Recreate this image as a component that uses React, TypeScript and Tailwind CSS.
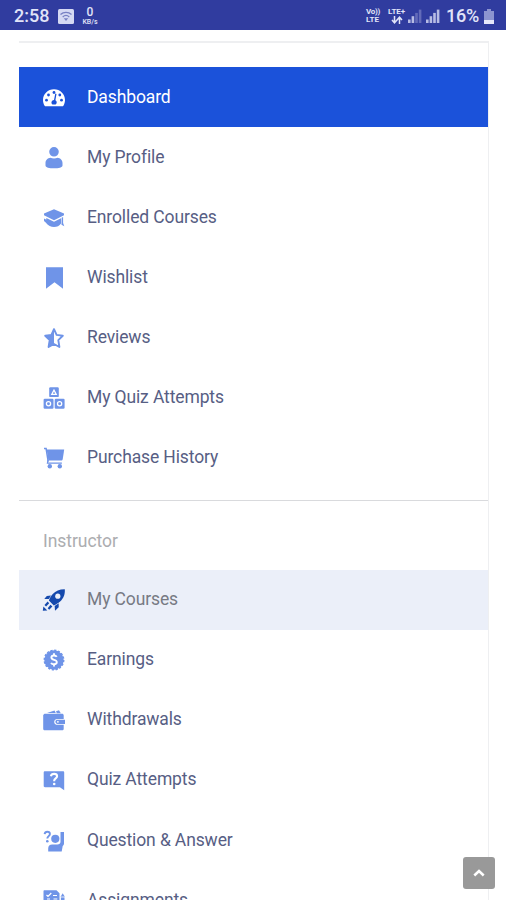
import React from "react";

type IconName =
  | "gauge" | "user" | "cap" | "bookmark" | "star" | "blocks" | "cart"
  | "rocket" | "badge" | "wallet" | "quiz" | "ask" | "assign";

const icons: Record<IconName, React.ReactNode> = {
  gauge: (
    <>
      <path fill="currentColor" d="M11 2.2C4.9 2.2 0 7 0 13c0 2.100.6 4.100 1.600 5.700.3.500.700.600 1.200.600h16.400c.5 0 .9-.1 1.200-.6 1-1.600 1.600-3.600 1.600-5.700C22 7 17.100 2.200 11 2.200z" />
      <g fill="#1b52da">
        <circle cx="11" cy="5.500" r="1.400" /><circle cx="5.500" cy="8" r="1.400" />
        <circle cx="3.500" cy="13.200" r="1.400" /><circle cx="18.500" cy="13.200" r="1.400" />
        <circle cx="16.800" cy="8" r="1.400" />
        <path d="M12.300 6.600l1.200.3-1.100 6.300a2.500 2.500 0 0 1 .2 4.300H9.400a2.500 2.500 0 0 1 1.600-4.500z" />
      </g>
    </>
  ),
  user: (
    <path fill="currentColor" d="M11 0a4.800 4.800 0 1 1 0 9.600A4.800 4.800 0 0 1 11 0zM7.500 10.700c1 .5 2.100.8 3.500.8s2.500-.3 3.500-.8c2.900.2 5 2.500 5 5.400v2.300c0 2-3.800 2.900-8.500 2.900s-8.500-.9-8.500-2.900v-2.300c0-2.900 2.100-5.200 5-5.400z" />
  ),
  cap: (
    <>
      <path fill="currentColor" d="M11 2.200L21 6.500v1.700l-10 5-10-5V6.500z" />
      <path fill="currentColor" d="M3.300 11l7.700 3.700 7-3.400v5.200c-1.500 2.300-4 3.600-7 3.600s-6-1.400-7.700-3.800zM1 11.500l2.500 1.200v3.500L1 14zM18.600 10.700l1.500-.7v6l1.200 3.300-2.800-1.500z" />
    </>
  ),
  bookmark: <path fill="currentColor" d="M3 .3h17v21.500l-8.500-6.500L3 21.800z" />,
  star: (
    <>
      <path fill="none" stroke="currentColor" strokeWidth="1.900" strokeLinejoin="round" d="M11 2.200l2.600 5.700 6.200.8-4.500 4.400 1.100 6.900-5.400-3-5.400 3 1.100-6.900-4.500-4.400 6.200-.8z" />
      <path fill="currentColor" d="M11 1v16l-5.700 3.600 1.100-7.500-4.700-4.500 6.500-.8z" />
    </>
  ),
  blocks: (
    <>
      <g fill="currentColor">
        <rect x="6.200" y=".3" width="9.600" height="9.800" rx="1.200" />
        <rect x=".6" y="11.800" width="9.900" height="9.900" rx="1.200" />
        <rect x="11.700" y="11.800" width="9.900" height="9.900" rx="1.200" />
      </g>
      <g fill="none" stroke="#fff" strokeWidth="1.300">
        <path d="M11 3.100L8.800 7.300h4.400z" /><circle cx="5.500" cy="16.700" r="2.100" /><circle cx="16.600" cy="16.700" r="2.100" />
      </g>
    </>
  ),
  cart: (
    <>
      <path d="M1 1.600h2.100l2.100 13" fill="none" stroke="currentColor" strokeWidth="1.500" />
      <path fill="currentColor" d="M3.700 2.600h17.500l-1.500 9.700c-.2.900-.7 1.300-1.500 1.300H5.400z" />
      <path d="M5 13.200l-.6 3h14.500" fill="none" stroke="currentColor" strokeWidth="1.200" />
      <circle cx="6.800" cy="19.200" r="2.200" fill="currentColor" /><circle cx="16.800" cy="19.200" r="2.200" fill="currentColor" />
    </>
  ),
  rocket: (
    <>
      <path fill="currentColor" d="M21.800.3c.4 5.400-1.400 9.300-4.700 12.300-2 1.800-4.300 3.200-6.300 3.900l-4.900-4.900c.8-2.200 2-4.600 3.900-6.500C12.800 1.800 16.700.2 21.800.3z" />
      <circle cx="14.800" cy="7.200" r="2.600" fill="#ebeff9" />
      <g fill="currentColor">
        <path d="M8 6.500L5.800 10H1.300l2.500-3z" /><path d="M15.700 14.300v4L12 21.700l-.3-4.800z" />
        <path d="M4.600 12.600l1.600 1.700-3.100 3.200-1.600-1.400zM7.500 15.700l1.900 1.800-3.200 3.300-1.500-1.500zM.4 17.500l3.900 3.900-4.500.4z" />
      </g>
    </>
  ),
  badge: (
    <>
      <circle cx="11" cy="11" r="9.700" fill="currentColor" />
      <circle cx="11" cy="11" r="9.700" fill="none" stroke="currentColor" strokeWidth="1.500" strokeDasharray="2.200 1.600" />
      <path d="M13.700 7.900c-.5-1-1.400-1.400-2.700-1.400-1.600 0-2.600.8-2.600 2 0 3.100 5.400 1.500 5.400 4.600 0 1.400-1.200 2.200-2.800 2.200-1.400 0-2.400-.5-2.900-1.500M11 4.300v2.400M11 15v2.600" fill="none" stroke="#fff" strokeWidth="1.900" />
    </>
  ),
  wallet: (
    <>
      <path fill="currentColor" d="M4 4.100l7.500-2.700 1.300 2.700zM13 2.200l3-.9 1.800 3h-4z" />
      <path fill="currentColor" d="M1.500 4.700H19c1 0 1.700.7 1.700 1.700v3.600h-6.200c-2 0-3.300 1.100-3.300 2.900s1.300 2.900 3.300 2.900h6.200v4c0 1-.7 1.500-1.700 1.500H2c-1.100 0-1.800-.6-1.800-1.600V6z" />
      <path fill="currentColor" d="M14.500 10.700H22v4.200h-7.500c-1.200 0-2.100-.9-2.100-2.100s.9-2.100 2.100-2.100z" />
      <circle cx="14.900" cy="12.800" r=".9" fill="#fff" />
    </>
  ),
  quiz: (
    <>
      <path fill="currentColor" d="M2 2.300h18c.7 0 1.200.5 1.200 1.200v17.800l-4.300-3.100H2c-.8 0-1.300-.5-1.300-1.200V3.500c0-.7.500-1.200 1.300-1.200z" />
      <path d="M7.900 7.200c.3-1.600 1.500-2.300 3.200-2.300 1.800 0 3 .9 3 2.400 0 2-2.900 2.200-2.900 4.400v.5" fill="none" stroke="#fff" strokeWidth="2.100" />
      <circle cx="11.200" cy="15" r="1.300" fill="#fff" />
    </>
  ),
  ask: (
    <>
      <path d="M1.600 4.100C1.900 2.400 3 1.700 4.300 1.700c1.600 0 2.600.9 2.600 2.300 0 2-2.600 2.300-2.600 4.500" fill="none" stroke="currentColor" strokeWidth="1.900" />
      <circle cx="4.300" cy="11.200" r="1.300" fill="currentColor" />
      <circle cx="12.300" cy="8.800" r="4.100" fill="currentColor" />
      <path fill="currentColor" d="M17.500 2H21v11.500c0 1.200-.6 2-1.300 2.500L18.700 21.600H5.200v-3.200c0-2.500 1.500-4 4-4h5.100c2 0 3.200-.8 3.200-2.600z" />
    </>
  ),
  assign: (
    <>
      <path fill="currentColor" d="M1.500.3h12l3 3v18.400h-15c-.6 0-1-.4-1-1V1.300c0-.6.400-1 1-1z" />
      <path d="M3.500 5l1.500 1.500L8.300 3M10 5.500h4" fill="none" stroke="#fff" strokeWidth="1.200" />
      <path d="M10.500 9h3.800M4 9h3" stroke="#fff" strokeWidth="1.200" />
      <path fill="currentColor" d="M19.700 3.200l1.800 3v11h-3.600v-11z" /><path d="M17.500 7h4.500" stroke="#fff" strokeWidth=".8" />
    </>
  ),
};

interface Item { label: string; icon: IconName }

const student: Item[] = [
  { label: "Dashboard", icon: "gauge" },
  { label: "My Profile", icon: "user" },
  { label: "Enrolled Courses", icon: "cap" },
  { label: "Wishlist", icon: "bookmark" },
  { label: "Reviews", icon: "star" },
  { label: "My Quiz Attempts", icon: "blocks" },
  { label: "Purchase History", icon: "cart" },
];

const instructor: Item[] = [
  { label: "My Courses", icon: "rocket" },
  { label: "Earnings", icon: "badge" },
  { label: "Withdrawals", icon: "wallet" },
  { label: "Quiz Attempts", icon: "quiz" },
  { label: "Question & Answer", icon: "ask" },
  { label: "Assignments", icon: "assign" },
];

function Row({ label, icon }: Item) {
  const tone =
    icon === "gauge"
      ? "bg-[#1b52da] text-white"
      : icon === "rocket"
        ? "bg-[#ebeff9] text-[#777a84]"
        : "text-[#575e84]";
  const iconTone =
    icon === "gauge" ? "text-white" : icon === "rocket" ? "text-[#1549ad]" : "text-[#6f94e8]";
  return (
    <a className={`flex h-[60.1px] shrink-0 items-center gap-[22px] pl-6 ${tone}`}>
      <svg viewBox="0 0 22 22" className={`mt-px size-[22px] shrink-0 overflow-visible ${iconTone}`}>
        {icons[icon]}
      </svg>
      <span className="pb-px text-[17.500px] leading-6 tracking-[-0.120px]">{label}</span>
    </a>
  );
}

function Signal({ level }: { level: number }) {
  return (
    <svg viewBox="0 0 14 14" className="h-[14px] w-[14px]" fill="#d9dcf5">
      {[0, 1, 2, 3].map((i) => (
        <rect key={i} x={i * 3.600} y={10.500 - i * 3.300} width="2.600" height={3.500 + i * 3.300} opacity={i < level ? 0.8 : 0.3} />
      ))}
    </svg>
  );
}

function StatusBar() {
  return (
    <header className="flex h-[30px] shrink-0 items-center justify-between bg-[#303c9f] pr-3 pl-[14px] text-[#e1e4f8]">
      <div className="flex items-center pt-[2px]">
        <span className="w-[44px] text-[18px] leading-5 font-medium">2:58</span>
        <svg viewBox="0 0 16 15" className="h-[15px] w-4">
          <rect width="16" height="15" rx="1.500" fill="#d5d9f3" />
          <path d="M2.500 5.500C5.600 2.600 10.400 2.600 13.500 5.500M4.700 7.900c1.900-1.700 4.700-1.700 6.600 0" stroke="#7780c3" fill="none" strokeWidth="1.300" />
          <path d="M5.800 9.300h4.400L8 12z" fill="#7780c3" />
        </svg>
        <div className="ml-[6px] flex w-5 flex-col items-center">
          <span className="text-[12px] leading-[11px] font-medium">0</span>
          <span className="text-[7px] leading-[8px] font-medium">KB/s</span>
        </div>
      </div>
      <div className="flex items-center pt-[2px]">
        <div className="flex w-[21px] flex-col text-[8px] leading-[8.500px] font-bold">
          <span className="tracking-[-0.300px]">Vo))</span><span>LTE</span>
        </div>
        <div className="mr-[2px] flex w-[19px] flex-col items-center text-[8px] leading-[8.500px] font-bold tracking-[-0.100px]">
          <span>LTE+</span>
          <svg viewBox="0 0 12 8" className="h-2 w-3" fill="none" stroke="currentColor" strokeWidth="1.500">
            <path d="M3.500 0v6M1 4l2.500 2.800L6 4M8.500 8V1.500M6 4l2.500-2.800L11 4" />
          </svg>
        </div>
        <div className="flex gap-1"><Signal level={2} /><Signal level={4} /></div>
        <span className="ml-[6px] w-[38px] text-[18px] leading-5 font-medium tracking-[-0.200px]">16%</span>
        <svg viewBox="0 0 10 15" className="h-[15px] w-[10px]">
          <path d="M3 0h4v2h3v9H0V2h3z" fill="#8c94d0" /><path d="M0 11h10v4H0z" fill="#e5e7fa" />
        </svg>
      </div>
    </header>
  );
}

export default function App() {
  return (
    <div className="relative flex h-[900px] w-[506px] flex-col overflow-hidden bg-white font-[Roboto,sans-serif]">
      <StatusBar />
      <main className="mt-[11px] ml-[19px] flex min-h-0 w-[470px] flex-1 flex-col overflow-hidden border-t-2 border-r border-[#eeeff1]">
        <nav className="mt-6 flex shrink-0 flex-col">
          {student.map((item) => <Row key={item.label} {...item} />)}
        </nav>
        <div className="mt-[12px] h-px shrink-0 bg-[#d9dadd]" />
        <h2 className="mt-[28px] mb-[17px] pl-6 text-[17.500px] leading-6 font-normal tracking-[-0.050px] text-[#acadb0]">Instructor</h2>
        <nav className="flex shrink-0 flex-col">
          {instructor.map((item) => <Row key={item.label} {...item} />)}
        </nav>
      </main>
      <button aria-label="Back to top" className="absolute top-[857px] left-[463px] flex size-8 items-center justify-center rounded-[3px] bg-[#999]">
        <svg viewBox="0 0 12 8" className="h-2 w-3" fill="none" stroke="#fff" strokeWidth="2.500"><path d="M1.300 6.500L6 2l4.700 4.500" /></svg>
      </button>
    </div>
  );
}
